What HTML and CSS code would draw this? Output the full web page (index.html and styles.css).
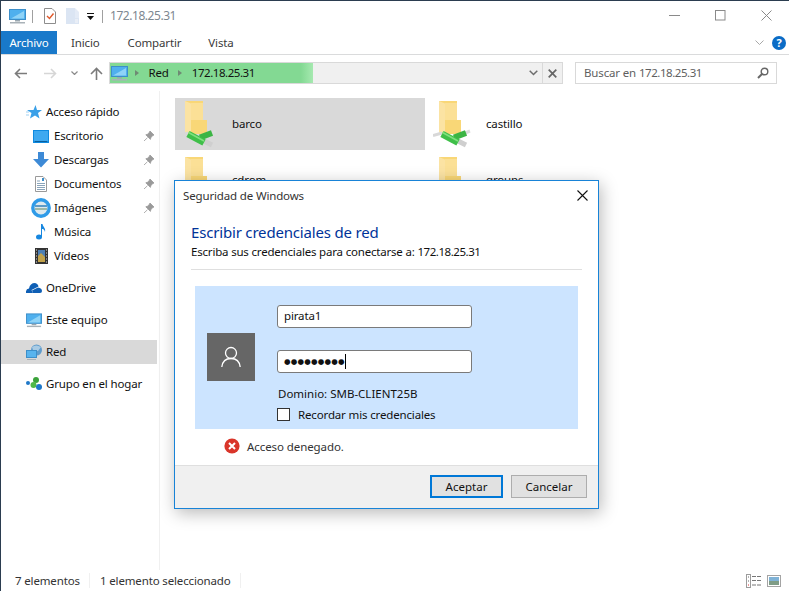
FILE: index.html
```html
<!DOCTYPE html>
<html lang="es">
<head>
  <meta charset="UTF-8">
  <title>172.18.25.31</title>
  <link rel="stylesheet" href="styles.css">
</head>
<body>
<svg class="defs" width="0" height="0">
  <symbol id="pc" viewBox="0 0 17 15">
    <rect x="0.5" y="0.5" width="16" height="10" fill="#4fb0ee" stroke="#3d8fc9"/>
    <path d="M2 9.5 L15 2 V9.5Z" fill="#8fd3f7"/>
    <rect x="6" y="11" width="5" height="1.5" fill="#9aa7b0"/>
    <rect x="1" y="13" width="15" height="1.5" fill="#a9b2b8"/>
  </symbol>
  <symbol id="share" viewBox="0 0 38 48">
    <path d="M6 1H24V20H28V34H6Z" fill="#f9d777"/>
    <path d="M12 3H24V20H12Z" fill="#fbe096"/>
    <path d="M6 1L12 3.500V33H6Z" fill="#fbe3a3"/>
    <path d="M0 35.500L9 33" stroke="#d8d8d8" stroke-width="3"/>
    <path d="M25 41L33 45" stroke="#cfcfcf" stroke-width="5"/>
    <path d="M31 33.500L37 31" stroke="#dcdcdc" stroke-width="3"/>
    <path d="M21 37.500L33 33" stroke="#3cb544" stroke-width="6"/>
    <path d="M9 34L25 42.500" stroke="#3fbf49" stroke-width="7"/>
    <path d="M9.500 32.500L25 41" stroke="#7fe07f" stroke-width="1.500"/>
  </symbol>
  <symbol id="pin" viewBox="0 0 10 10">
    <path d="M6 0 L10 4 L8.5 4.7 L6.8 6.8 L6.4 8.4 L1.8 3.8 L3.5 3.2 L5.3 1.5Z M3.5 6.7 L0 10" fill="#9a9a9a" stroke="#9a9a9a" stroke-width="0.8"/>
  </symbol>
</svg>

<div class="window">
  <div class="titlebar">
    <svg class="qa-pc" width="17" height="15"><use href="#pc"/></svg>
    <span class="qa-sep"></span>
    <svg class="qa-prop" width="12" height="16" viewBox="0 0 12 16">
      <path d="M.5.5H8L11.5 4V15.5H.5Z" fill="#fff" stroke="#8d8d8d"/>
      <path d="M3 8 L5.5 10.5 L9.5 5.5" fill="none" stroke="#e0582a" stroke-width="1.4"/>
    </svg>
    <svg class="qa-new" width="13" height="16" viewBox="0 0 13 16">
      <path d="M0 0H9V10H13V16H0Z" fill="#dbe5f3"/>
      <path d="M9 0L13 4V10H9Z" fill="#e4ebf6"/>
      <path d="M9 11H12V15H9Z" fill="#e9eef6"/>
    </svg>
    <svg class="qa-drop" width="7" height="7" viewBox="0 0 7 7">
      <path d="M0 0H7V1H0Z M0 3H7L3.5 7Z" fill="#111"/>
    </svg>
    <span class="qa-sep qa-sep-b"></span>
    <span class="title-text ip">172.18.25.31</span>
    <div class="win-controls">
      <svg width="11" height="11" viewBox="0 0 11 11"><path d="M0 5.5H11" stroke="#8a8a8a"/></svg>
      <svg width="11" height="11" viewBox="0 0 11 11"><rect x=".5" y=".5" width="9.5" height="9.5" fill="none" stroke="#8a8a8a"/></svg>
      <svg width="11" height="11" viewBox="0 0 11 11"><path d="M.5.5L10.5 10.5M10.5.5L.5 10.5" stroke="#8a8a8a"/></svg>
    </div>
  </div>

  <div class="ribbon">
    <span class="tab tab-file">Archivo</span>
    <span class="tab tab-home">Inicio</span>
    <span class="tab tab-share">Compartir</span>
    <span class="tab">Vista</span>
    <svg class="ribbon-chevron" width="9" height="5" viewBox="0 0 9 5"><path d="M.5.5L4.5 4.5L8.5.5" fill="none" stroke="#a8a8a8"/></svg>
    <span class="help">?</span>
  </div>

  <div class="navbar">
    <svg class="nav-back" width="13" height="11" viewBox="0 0 13 11"><path d="M13 5.5H2M6 1L1.5 5.5L6 10" fill="none" stroke="#7b7b7b" stroke-width="1.6"/></svg>
    <svg class="nav-fwd" width="13" height="11" viewBox="0 0 13 11"><path d="M0 5.5H11M7 1L11.5 5.5L7 10" fill="none" stroke="#d6d6d6" stroke-width="1.6"/></svg>
    <svg class="nav-recent" width="7" height="4" viewBox="0 0 7 4"><path d="M.5.5L3.5 3.5L6.5.5" fill="none" stroke="#8a8a8a" stroke-width="1.2"/></svg>
    <svg class="nav-up" width="13" height="13" viewBox="0 0 13 13"><path d="M6.5 13V2M1 7L6.5 1.5L12 7" fill="none" stroke="#7b7b7b" stroke-width="1.6"/></svg>
    <div class="address">
      <div class="crumbs">
        <svg width="17" height="15"><use href="#pc"/></svg>
        <span class="crumb-arrow crumb-first"></span>
        <span class="crumb-text">Red</span>
        <span class="crumb-arrow"></span>
        <span class="crumb-text ip">172.18.25.31</span>
      </div>
      <svg class="addr-drop" width="9" height="6" viewBox="0 0 9 6"><path d="M.7.7L4.5 4.5L8.3.7" fill="none" stroke="#6d6d6d" stroke-width="1.5"/></svg>
      <div class="addr-stop">
        <svg width="9" height="9" viewBox="0 0 9 9"><path d="M.7.7L8.3 8.3M8.3.7L.7 8.3" stroke="#666" stroke-width="1.7"/></svg>
      </div>
    </div>
    <div class="search">
      <span class="crumb-text">Buscar en <span class="ip">172.18.25.31</span></span>
      <svg width="12" height="12" viewBox="0 0 12 12"><circle cx="7.5" cy="4.5" r="3.3" fill="none" stroke="#666" stroke-width="1.4"/><path d="M5 7L1 11" stroke="#666" stroke-width="2"/></svg>
    </div>
  </div>

  <div class="main">
    <div class="sidebar">
      <div class="nav-item">
        <svg width="16" height="16" viewBox="0 0 16 16"><path d="M9.5 1L11 6H16L12 9L13.5 14.5L9 11.5L4 14.5L5.5 9L1 6H7.5Z" fill="#3aa0e8"/><path d="M0 8H3M0 11H3" stroke="#9ed0f2"/></svg>
        <span>Acceso rápido</span>
      </div>
      <div class="nav-item nav-child">
        <svg width="16" height="13" viewBox="0 0 16 13"><rect width="16" height="13" fill="#0f8ae0"/><rect x="1" y="1" width="14" height="10" fill="#3fa9f0"/><rect x="2" y="11" width="12" height="1" fill="#0a5e9c"/></svg>
        <span>Escritorio</span>
        <svg class="pin" width="10" height="10"><use href="#pin"/></svg>
      </div>
      <div class="nav-item nav-child">
        <svg width="16" height="16" viewBox="0 0 16 16"><path d="M5 0H11V7H16L8 15.500L0 7H5Z" fill="#3d8ad6"/></svg>
        <span>Descargas</span>
        <svg class="pin" width="10" height="10"><use href="#pin"/></svg>
      </div>
      <div class="nav-item nav-child">
        <svg width="16" height="16" viewBox="0 0 16 16"><path d="M2.500.5H10L13.500 4V15.500H2.500Z" fill="#fff" stroke="#9a9a9a"/><path d="M4 5H7M4 7.500H12M4 9.500H12M4 11.500H12M4 13.500H12" stroke="#8aa4ba"/><path d="M9 2H11V5H9Z" fill="#3e8ecb"/></svg>
        <span>Documentos</span>
        <svg class="pin" width="10" height="10"><use href="#pin"/></svg>
      </div>
      <div class="nav-item nav-child">
        <svg class="icon-pictures" width="20" height="20" viewBox="0 0 20 20"><circle cx="10" cy="10" r="8.200" fill="#dde9ee" stroke="#2f9be8" stroke-width="3.400"/><path d="M4 8H16" stroke="#5b9bc8" stroke-width="2"/><path d="M4 11H16" stroke="#9db8a8" stroke-width="2"/></svg>
        <span>Imágenes</span>
        <svg class="pin" width="10" height="10"><use href="#pin"/></svg>
      </div>
      <div class="nav-item nav-child">
        <svg width="16" height="16" viewBox="0 0 16 16"><ellipse cx="6" cy="13" rx="3" ry="2.500" fill="#1787e0"/><path d="M8 13V0H9.500C10 3 13 4 12 8C11.500 5.500 10 5 9 5V13Z" fill="#1787e0"/></svg>
        <span>Música</span>
      </div>
      <div class="nav-item nav-child">
        <svg width="16" height="16" viewBox="0 0 16 16"><rect x="2" y="0" width="13" height="16" fill="#333"/><rect x="5" y="2" width="7" height="12" fill="#4d7fb5"/><path d="M5 8L8 5L12 9V14H5Z" fill="#c2a24a"/><path d="M3 2H4M3 5H4M3 8H4M3 11H4M3 14H4M13 2H14M13 5H14M13 8H14M13 11H14M13 14H14" stroke="#ddd"/></svg>
        <span>Vídeos</span>
      </div>
      <div class="nav-item nav-group">
        <svg width="16" height="12" viewBox="0 0 16 12"><path d="M0 11Q-.5 7 3 6.500Q4 1 9 1Q12 1.500 12.500 4.500L5.500 8L7 11Z" fill="#0f5fb5"/><path d="M7 11L6 8.500L12 5.500Q16 6 16 9Q16 11 14 11Z" fill="#0f5fb5"/></svg>
        <span>OneDrive</span>
      </div>
      <div class="nav-item nav-group">
        <svg width="16" height="15"><use href="#pc"/></svg>
        <span>Este equipo</span>
      </div>
      <div class="nav-item nav-group nav-selected">
        <svg width="16" height="16" viewBox="0 0 16 16"><circle cx="10.500" cy="6" r="5.500" fill="#5f9ccc"/><path d="M6 3Q10 0 15 3L12 7L7 6Z" fill="#a9cbe4"/><rect x=".5" y="6.500" width="10" height="7" fill="#58b4ee" stroke="#3d8fc9"/><rect x="1" y="15" width="9" height="1" fill="#a9b2b8"/></svg>
        <span>Red</span>
      </div>
      <div class="nav-item nav-group">
        <svg width="16" height="14" viewBox="0 0 16 14"><circle cx="2" cy="6" r="2" fill="#1e78c8"/><circle cx="10" cy="3" r="3" fill="#3aa23a"/><circle cx="7.500" cy="8" r="3" fill="#50b848"/><circle cx="13" cy="10" r="3" fill="#1e78c8"/></svg>
        <span>Grupo en el hogar</span>
      </div>
    </div>

    <div class="content">
      <div class="file-grid">
        <div class="file file-selected">
          <svg width="38" height="48"><use href="#share"/></svg>
          <span>barco</span>
        </div>
        <div class="file">
          <svg width="38" height="48"><use href="#share"/></svg>
          <span>castillo</span>
        </div>
        <div class="file">
          <svg width="38" height="48"><use href="#share"/></svg>
          <span>cdrom</span>
        </div>
        <div class="file">
          <svg width="38" height="48"><use href="#share"/></svg>
          <span>groups</span>
        </div>
      </div>
    </div>
  </div>

  <div class="statusbar">
    <span class="status-count">7 elementos</span>
    <span class="status-sel">1 elemento seleccionado</span>
    <svg class="view-details" width="16" height="14" viewBox="0 0 16 14">
      <rect x=".5" y=".5" width="4" height="13" fill="#fff" stroke="#9c9c9c"/>
      <path d="M2 3H3M2 7H3" stroke="#666"/><path d="M2 11H3" stroke="#d33"/>
      <path d="M6 2.500H10M11 2.500H15M6 6.500H10M11 6.500H15M6 11H10M11 11H15" stroke="#777"/>
    </svg>
    <svg class="view-large" width="14" height="12" viewBox="0 0 14 12">
      <rect x=".5" y=".5" width="13" height="11" fill="#fff" stroke="#a4a4a4"/>
      <rect x="2" y="2" width="10" height="4" fill="#7fb2d6"/>
      <rect x="2" y="6" width="10" height="4" fill="#7f9c86"/>
    </svg>
  </div>
</div>

<div class="dialog">
  <div class="dialog-title">
    <span>Seguridad de Windows</span>
    <svg width="11" height="11" viewBox="0 0 11 11"><path d="M.5.5L10.500 10.500M10.500.5L.5 10.500" stroke="#111" stroke-width="1.100"/></svg>
  </div>
  <div class="dialog-head">
    <h1>Escribir credenciales de red</h1>
    <p>Escriba sus credenciales para conectarse a: <span class="ip">172.18.25.31</span></p>
  </div>
  <div class="cred-panel">
    <div class="user-tile">
      <svg width="20" height="22" viewBox="0 0 20 22"><circle cx="10" cy="7" r="5.500" fill="none" stroke="#fff" stroke-width="1.300"/><path d="M.8 21C1.500 15 5 12.500 10 12.500S18.500 15 19.200 21" fill="none" stroke="#fff" stroke-width="1.300"/></svg>
    </div>
    <div class="cred-fields">
      <div class="field">pirata1</div>
      <div class="field field-pass"><span class="dots">●●●●●●●●●</span><span class="caret"></span></div>
      <div class="domain">Dominio: SMB-CLIENT25B</div>
      <div class="remember"><span class="checkbox"></span><span>Recordar mis credenciales</span></div>
    </div>
  </div>
  <div class="error-line">
    <svg width="16" height="16" viewBox="0 0 16 16"><circle cx="8" cy="8" r="7.600" fill="#d9352a"/><path d="M5 5L11 11M11 5L5 11" stroke="#fff" stroke-width="2"/></svg>
    <span>Acceso denegado.</span>
  </div>
  <div class="dialog-footer">
    <button class="btn btn-default">Aceptar</button>
    <button class="btn btn-cancel">Cancelar</button>
  </div>
</div>
</body>
</html>
```

FILE: styles.css
```css
* {
  box-sizing: border-box;
}
html, body {
  margin: 0;
  height: 100%;
  overflow: hidden;
}
body {
  font-family: "Noto Sans", sans-serif;
  font-size: 11.5px;
  letter-spacing: -0.15px;
  color: #111;
  background: #fff;
}
.defs {
  position: absolute;
}
svg {
  display: block;
  flex: none;
}
.ip {
  letter-spacing: -0.45px;
}

.window {
  width: 789px;
  height: 591px;
  border-top: 1px solid #2b3d50;
  border-left: 1px solid #2b3d50;
  display: flex;
  flex-direction: column;
}

/* title bar */
.titlebar {
  height: 30px;
  display: flex;
  align-items: center;
  padding-left: 8px;
}
.qa-sep {
  width: 1px;
  height: 13px;
  background: #a0a0a0;
  margin-left: 6px;
}
.qa-prop {
  margin-left: 11px;
}
.qa-new {
  margin-left: 10px;
}
.qa-drop {
  margin-left: 8px;
}
.qa-sep-b {
  margin-left: 8px;
}
.title-text {
  margin-left: 7px;
  padding-bottom: 2px;
  color: #7d8790;
  font-size: 12px;
}
.win-controls {
  margin-left: auto;
  display: flex;
  gap: 35px;
  padding: 0 17px 2px 0;
}

/* ribbon */
.ribbon {
  height: 24px;
  display: flex;
  align-items: center;
  border-bottom: 1px solid #dadbdc;
}
.tab {
  font-size: 11.5px;
  color: #3a3a3a;
}
.tab-file {
  width: 56px;
  height: 23px;
  background: #1979ca;
  color: #fff;
  display: flex;
  align-items: center;
  justify-content: center;
}
.tab-home {
  margin-left: 14px;
}
.tab-share {
  margin-left: 28px;
}
.tab-share + .tab {
  margin-left: 27px;
}
.ribbon-chevron {
  margin-left: auto;
}
.help {
  width: 14px;
  height: 14px;
  margin: 0 3px 0 8px;
  border-radius: 50%;
  background: #0b6cc6;
  color: #fff;
  font-size: 11px;
  font-weight: bold;
  line-height: 14px;
  text-align: center;
}

/* address row */
.navbar {
  height: 36px;
  display: flex;
  align-items: center;
}
.nav-back {
  margin-left: 13px;
}
.nav-fwd {
  margin-left: 17px;
}
.nav-recent {
  margin-left: 14px;
}
.nav-up {
  margin-left: 12px;
}
.address {
  margin-left: 6px;
  width: 454px;
  height: 22px;
  display: flex;
  align-items: center;
  background: #f0f0f0;
  border: 1px solid #d9d9d9;
}
.crumbs {
  width: 203px;
  height: 20px;
  display: flex;
  align-items: center;
  gap: 9.5px;
  padding-left: 1px;
  background: linear-gradient(to right, #83d993 0, #83d993 94%, #a6e9b0 100%);
  color: #111;
}
.crumb-text {
  padding-bottom: 2px;
}
.crumb-arrow {
  width: 0;
  height: 0;
  border-left: 4px solid #6f8a74;
  border-top: 3.5px solid transparent;
  border-bottom: 3.5px solid transparent;
}
.crumb-first {
  margin-left: -2.5px;
}
.addr-drop {
  margin-left: auto;
  margin-right: 4px;
}
.addr-stop {
  width: 20px;
  height: 20px;
  border-left: 1px solid #d9d9d9;
  display: flex;
  align-items: center;
  justify-content: center;
}
.search {
  margin-left: 12px;
  width: 202px;
  height: 22px;
  display: flex;
  align-items: center;
  justify-content: space-between;
  padding: 0 7px 0 8px;
  border: 1px solid #d9d9d9;
  color: #5f5f5f;
}

/* main area */
.main {
  flex: 1;
  display: flex;
  min-height: 0;
}
.sidebar {
  width: 159px;
  border-right: 1px solid #f0f0f0;
  padding-top: 9px;
}
.nav-item {
  height: 24px;
  width: 156px;
  display: flex;
  align-items: center;
  gap: 4px;
  padding-left: 25px;
  position: relative;
}
.nav-item span {
  padding-bottom: 2px;
}
.nav-child {
  padding-left: 32px;
  gap: 5px;
}
.nav-group {
  margin-top: 8px;
}
.nav-selected {
  background: #d9d9d9;
}
.pin {
  position: absolute;
  left: 143px;
  top: 7px;
}
.icon-pictures {
  margin: 0 -2px;
}
.content {
  flex: 1;
  padding: 7px 0 0 15px;
}
.file-grid {
  display: grid;
  grid-template-columns: 250px 250px;
  grid-auto-rows: 52px;
  gap: 4px;
}
.file {
  display: flex;
  align-items: center;
  gap: 15px;
  padding-left: 4px;
}
.file span {
  padding-bottom: 2px;
}
.file-selected {
  background: #d9d9d9;
}

/* status bar */
.statusbar {
  height: 21px;
  display: flex;
  align-items: center;
  padding-left: 14px;
  color: #333;
}
.status-count {
  width: 75px;
  border-right: 1px solid #f0f0f0;
}
.status-sel {
  margin-left: 10px;
  width: 141px;
  border-right: 1px solid #f0f0f0;
}
.view-details {
  margin-left: auto;
}
.view-large {
  margin: 0 8px 0 5px;
}

/* credentials dialog */
.dialog {
  position: absolute;
  left: 174px;
  top: 180px;
  width: 425px;
  height: 329px;
  display: flex;
  flex-direction: column;
  background: #fff;
  border: 1px solid #1883d7;
  box-shadow: 2px 4px 16px rgba(0, 0, 0, 0.28);
}
.dialog-title {
  height: 28px;
  flex: none;
  display: flex;
  align-items: center;
  justify-content: space-between;
  padding: 0 10px 0 8px;
  color: #333;
}
.dialog-head {
  margin: 11px 16px 0;
  height: 50px;
  flex: none;
  border-bottom: 1px solid #dfdfdf;
}
.dialog-head h1 {
  margin: 0;
  font-size: 15px;
  letter-spacing: -0.18px;
  font-weight: normal;
  color: #003399;
  line-height: 24px;
}
.dialog-head p {
  margin: 0;
  line-height: 15px;
  letter-spacing: -0.19px;
}
.cred-panel {
  margin: 16px 20px 0;
  width: 383px;
  height: 143px;
  flex: none;
  display: flex;
  background: #cce4ff;
}
.user-tile {
  width: 48px;
  height: 48px;
  margin: 47px 0 0 12px;
  background: #666;
  display: flex;
  align-items: center;
  justify-content: center;
}
.cred-fields {
  margin: 19px 0 0 22px;
}
.field {
  width: 195px;
  height: 23px;
  padding-left: 6px;
  line-height: 19px;
  background: #fff;
  border: 1px solid #7a7a7a;
  border-radius: 3px;
  margin-bottom: 22px;
}
.field-pass {
  display: flex;
  align-items: center;
}
.dots {
  font-size: 7.5px;
  letter-spacing: 0.2px;
  font-family: "DejaVu Sans", sans-serif;
}
.caret {
  width: 1px;
  height: 15px;
  background: #000;
}
.domain {
  margin: -9px 0 0 1px;
  line-height: 16px;
  letter-spacing: 0;
}
.remember {
  margin-top: 5px;
  display: flex;
  align-items: center;
  gap: 8px;
}
.checkbox {
  width: 13px;
  height: 13px;
  background: #fff;
  border: 1px solid #333;
}
.error-line {
  height: 36px;
  flex: none;
  display: flex;
  align-items: center;
  gap: 7px;
  padding: 0 0 2px 49px;
  color: #333;
  letter-spacing: -0.08px;
}
.dialog-footer {
  flex: 1;
  display: flex;
  justify-content: flex-end;
  align-items: flex-start;
  gap: 8px;
  padding: 9px 11px 0 0;
  background: #f0f0f0;
  border-top: 1px solid #dfdfdf;
}
.btn {
  height: 23px;
  padding: 0;
  font-family: inherit;
  font-size: 11.5px;
  color: #111;
  background: #e1e1e1;
}
.btn-default {
  width: 73px;
  border: 2px solid #0078d7;
}
.btn-cancel {
  width: 76px;
  border: 1px solid #adadad;
}
```
